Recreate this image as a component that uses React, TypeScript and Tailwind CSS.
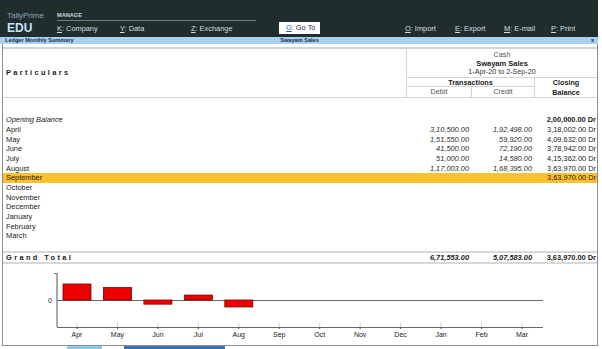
import React from "react";

type Row = {
  name: string;
  debit?: string;
  credit?: string;
  closing?: string;
  italic?: boolean;
  bold?: boolean;
  active?: boolean;
};

const rows: Row[] = [
  { name: "Opening Balance", italic: true, closing: "2,00,000.00 Dr", bold: true },
  { name: "April", debit: "3,10,500.00", credit: "1,92,498.00", closing: "3,18,002.00 Dr" },
  { name: "May", debit: "1,51,550.00", credit: "59,920.00", closing: "4,09,632.00 Dr" },
  { name: "June", debit: "41,500.00", credit: "72,190.00", closing: "3,78,942.00 Dr" },
  { name: "July", debit: "51,000.00", credit: "14,580.00", closing: "4,15,362.00 Dr" },
  { name: "August", debit: "1,17,003.00", credit: "1,68,395.00", closing: "3,63,970.00 Dr" },
  { name: "September", closing: "3,63,970.00 Dr", active: true },
  { name: "October" },
  { name: "November" },
  { name: "December" },
  { name: "January" },
  { name: "February" },
  { name: "March" },
];

// net movement per month (debit - credit), null where no data yet
const chart = [
  { m: "Apr", v: 118002 },
  { m: "May", v: 91630 },
  { m: "Jun", v: -30690 },
  { m: "Jul", v: 36420 },
  { m: "Aug", v: -51392 },
  { m: "Sep", v: 0 },
  { m: "Oct", v: 0 },
  { m: "Nov", v: 0 },
  { m: "Dec", v: 0 },
  { m: "Jan", v: 0 },
  { m: "Feb", v: 0 },
  { m: "Mar", v: 0 },
];

function Chart() {
  const zero = 300;
  const scale = 16 / 118002;
  return (
    <svg viewBox="3 264 594 81" width={594} height={81} className="block">
      <line x1={57} y1={273} x2={57} y2={327} stroke="#555" strokeWidth={1} />
      <line x1={54} y1={273.5} x2={57} y2={273.5} stroke="#777" strokeWidth={1} />
      <line x1={57} y1={zero + 0.5} x2={543} y2={zero + 0.5} stroke="#666" strokeWidth={1} />
      <line x1={57} y1={327.5} x2={543} y2={327.5} stroke="#666" strokeWidth={1} />
      <text x={50} y={302.5} fontSize={7} textAnchor="middle" fill="#222" fontFamily="Liberation Sans, Arial, sans-serif">
        0
      </text>
      {chart.map((c, i) => {
        const x = 77 + i * 40.45;
        const h = Math.abs(c.v) * scale;
        return (
          <g key={c.m}>
            <line x1={x} y1={323} x2={x} y2={327} stroke="#d0d0d0" strokeWidth={1} />
            <line x1={x} y1={327} x2={x} y2={329} stroke="#555" strokeWidth={1} />
            {c.v !== 0 && (
              <rect
                x={x - 14}
                y={c.v > 0 ? zero - h : zero}
                width={28}
                height={h}
                fill="#ee0000"
                stroke="#7a0000"
                strokeWidth={0.8}
              />
            )}
            <text
              x={x}
              y={336.5}
              fontSize={7}
              textAnchor="middle"
              fill="#222"
              fontFamily="Liberation Sans, Arial, sans-serif"
            >
              {c.m}
            </text>
          </g>
        );
      })}
    </svg>
  );
}

export default function App() {
  return (
    <div className="w-[602px] h-[349px] overflow-hidden bg-white font-['Liberation_Sans',Arial,sans-serif] text-[#1a1a1a]">
      <div className="w-[598px]">
        {/* Top bar */}
        <header className="h-[37px] bg-[#1f2d2d] flex text-[#d6dde0]">
          <div className="w-[57px] pl-[7px] pt-[12px]">
            <div className="text-[8px] leading-[8px] text-[#8aa6bf]">TallyPrime</div>
            <div className="mt-[2px] text-[12px] leading-[12px] font-bold text-[#c6e2f5]">EDU</div>
          </div>
          <div className="w-[199px] pt-[13px]">
            <div className="text-[5.6px] leading-[5px] font-bold text-[#c9d6e2]">MANAGE</div>
            <div className="mt-[2px] h-px bg-[#6f7d7d]" />
            <div className="mt-[4px] flex text-[7.4px] leading-[8px]">
              <span className="w-[63px]"><u>K</u>: Company</span>
              <span className="w-[71px]"><u>Y</u>: Data</span>
              <span><u>Z</u>: Exchange</span>
            </div>
          </div>
          <div className="ml-[23px] mt-[22px] h-[12px] w-[41px] bg-white pl-[7px] flex items-center text-[7.4px] text-[#1a2a3a]">
            <span className="text-[#2a5db0] underline">G</span>: Go To
          </div>
          <div className="ml-[85px] pt-[25px] flex text-[7.4px] leading-[8px]">
            <span className="w-[50px]"><u>O</u>: Import</span>
            <span className="w-[49px]"><u>E</u>: Export</span>
            <span className="w-[47px]"><u>M</u>: E-mail</span>
            <span><u>P</u>: Print</span>
          </div>
        </header>

        {/* Title strip */}
        <div className="h-[7px] bg-[#a8d0ef] grid grid-cols-[1fr_auto_1fr] items-center pl-[5px] pr-[4px] text-[5.6px] leading-none font-bold text-[#1b2b4b]">
          <span>Ledger Monthly Summary</span>
          <span>Swayam Sales</span>
          <span className="justify-self-end">x</span>
        </div>

        {/* Report body */}
        <div className="ml-[2px] w-[596px] h-[302px] border-l border-r border-b border-[#8c8c8c] pt-[3px] flex flex-col">
          <div className="h-[2px] bg-[#d4d4d4]" />

          {/* Column header */}
          <div className="h-[49px] border-b border-[#d4d4d4] flex">
            <div className="flex-1 flex items-center pl-[3px] text-[7.4px] font-bold tracking-[2.4px]">
              Particulars
            </div>
            <div className="w-[191px] border-l border-[#d4d4d4] flex flex-col text-[7.2px]">
              <div className="h-[30px] border-b border-[#d4d4d4] pt-[2px] text-center leading-[8.5px]">
                <div className="text-[#555]">Cash</div>
                <div className="font-bold text-[7.5px]">Swayam Sales</div>
                <div className="text-[#333]">1-Apr-20 to 2-Sep-20</div>
              </div>
              <div className="flex-1 flex">
                <div className="w-[127px] flex flex-col">
                  <div className="h-[9px] border-b border-[#d4d4d4] text-center font-bold leading-[9px]">
                    Transactions
                  </div>
                  <div className="flex-1 flex text-[#555] leading-[9px]">
                    <div className="w-[64px] text-center">Debit</div>
                    <div className="flex-1 border-l border-[#d4d4d4] text-center">Credit</div>
                  </div>
                </div>
                <div className="flex-1 border-l border-[#d4d4d4] text-center font-bold leading-[9.5px]">
                  <div>Closing</div>
                  <div>Balance</div>
                </div>
              </div>
            </div>
          </div>

          <div className="h-[17px]" />

          {/* Rows */}
          <div className="text-[7.4px]">
            {rows.map((r) => (
              <div
                key={r.name}
                className={`h-[9.67px] grid grid-cols-[403px_64px_63px_64px] items-center leading-[9px] ${
                  r.active ? "bg-[#fcc12f]" : ""
                }`}
              >
                <div className={`pl-[3px] ${r.italic ? "italic" : ""}`}>{r.name}</div>
                <div className="text-right pr-[1px] italic text-[#2a2a2a]">{r.debit}</div>
                <div className="text-right pr-[1px] italic text-[#2a2a2a]">{r.credit}</div>
                <div className={`text-right pr-[1px] ${r.bold ? "font-bold" : ""}`}>{r.closing}</div>
              </div>
            ))}
          </div>

          <div className="flex-1" />

          {/* Grand total */}
          <div className="h-[13px] border-t-2 border-b-2 border-[#d8d8d8] grid grid-cols-[403px_64px_63px_64px] items-center text-[7.4px] font-bold leading-[9px]">
            <div className="pl-[3px] tracking-[2.4px]">Grand Total</div>
            <div className="text-right pr-[1px] italic">6,71,553.00</div>
            <div className="text-right pr-[1px] italic">5,07,583.00</div>
            <div className="text-right pr-[1px]">3,63,970.00 Dr</div>
          </div>

          {/* Chart */}
          <div className="h-[81px]">
            <Chart />
          </div>
        </div>

        <div className="h-[3px] flex">
          <div className="ml-[67px] w-[35px] bg-[#8fc9ee]" />
          <div className="ml-[22px] w-[101px] bg-[#3f6fae]" />
        </div>
      </div>
    </div>
  );
}
